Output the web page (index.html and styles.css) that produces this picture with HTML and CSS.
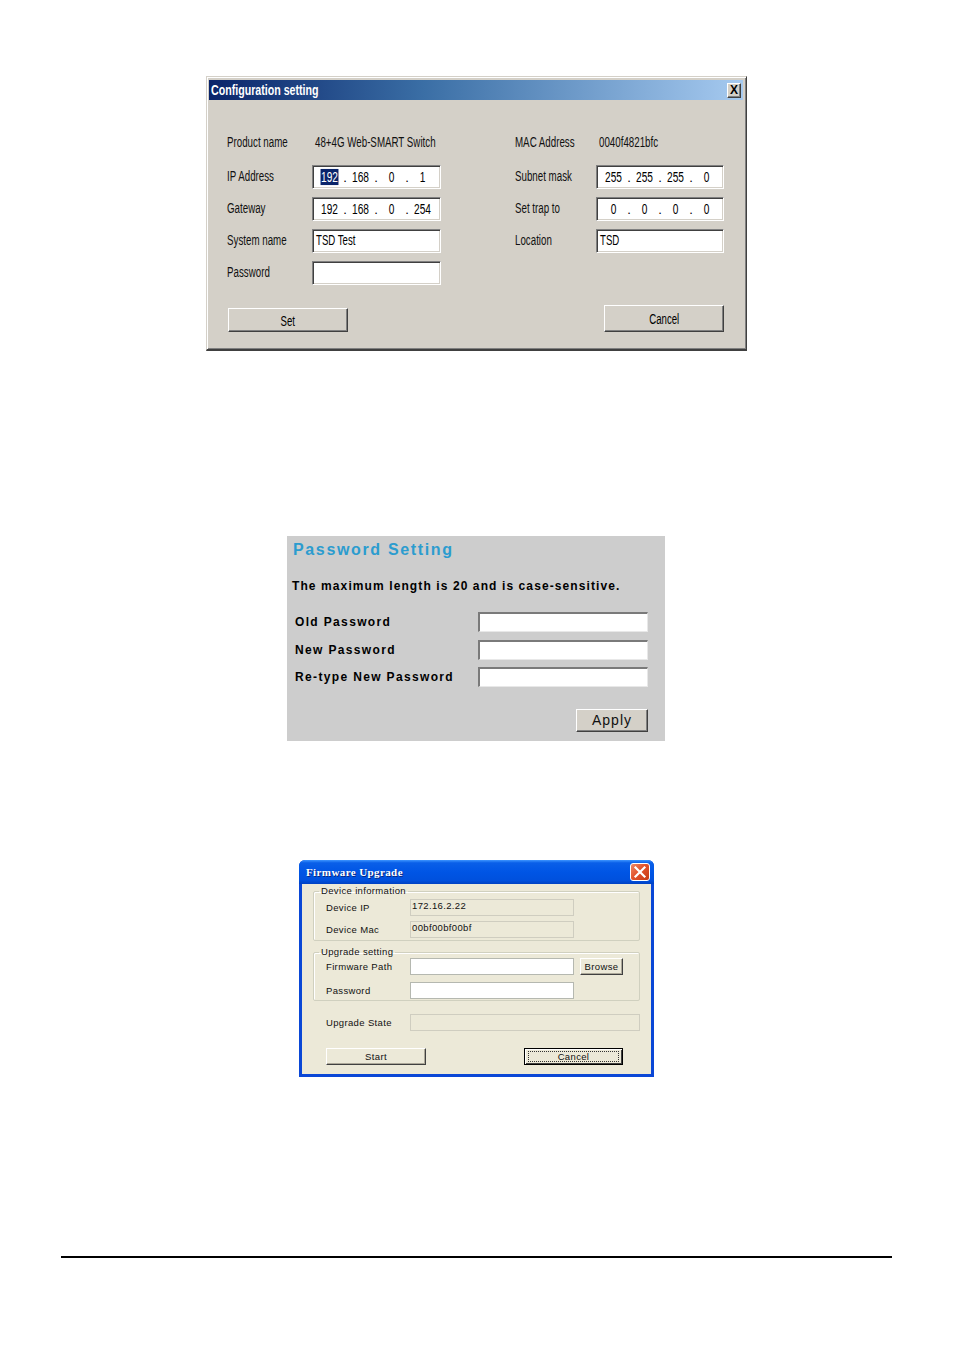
FILE: index.html
```html
<!DOCTYPE html>
<html>
<head>
<meta charset="utf-8">
<link rel="stylesheet" href="styles.css">
</head>
<body>
<div class="page">

  <section class="cfg">
    <div class="cfg-title">
      <span class="cfg-title-text">Configuration setting</span>
      <span class="cfg-close">X</span>
    </div>
    <div class="cfg-body">
      <div class="cfg-grid">
        <span class="cl">Product name</span>
        <span class="cl cv">48+4G Web-SMART Switch</span>
        <span class="cl cr">MAC Address</span>
        <span class="cl cv">0040f4821bfc</span>

        <span class="cl">IP Address</span>
        <div class="cin ip"><span class="seg sel">192</span><span class="dot">.</span><span class="seg">168</span><span class="dot">.</span><span class="seg">0</span><span class="dot">.</span><span class="seg">1</span></div>
        <span class="cl cr">Subnet mask</span>
        <div class="cin ip"><span class="seg">255</span><span class="dot">.</span><span class="seg">255</span><span class="dot">.</span><span class="seg">255</span><span class="dot">.</span><span class="seg">0</span></div>

        <span class="cl">Gateway</span>
        <div class="cin ip"><span class="seg">192</span><span class="dot">.</span><span class="seg">168</span><span class="dot">.</span><span class="seg">0</span><span class="dot">.</span><span class="seg">254</span></div>
        <span class="cl cr">Set trap to</span>
        <div class="cin ip"><span class="seg">0</span><span class="dot">.</span><span class="seg">0</span><span class="dot">.</span><span class="seg">0</span><span class="dot">.</span><span class="seg">0</span></div>

        <span class="cl">System name</span>
        <div class="cin txt"><span class="ct">TSD Test</span></div>
        <span class="cl cr">Location</span>
        <div class="cin txt"><span class="ct">TSD</span></div>

        <span class="cl">Password</span>
        <div class="cin txt"></div>
      </div>
      <div class="cfg-buttons">
        <div class="cbtn set"><span class="ct">Set</span></div>
        <div class="cbtn cancel"><span class="ct">Cancel</span></div>
      </div>
    </div>
  </section>

  <section class="pw">
    <h2 class="pw-title">Password Setting</h2>
    <p class="pw-note">The maximum length is 20 and is case-sensitive.</p>
    <div class="pw-grid">
      <span class="pw-label">Old Password</span><div class="pw-input"></div>
      <span class="pw-label">New Password</span><div class="pw-input"></div>
      <span class="pw-label">Re-type New Password</span><div class="pw-input"></div>
    </div>
    <div class="pw-actions"><div class="pw-apply">Apply</div></div>
  </section>

  <section class="fw">
    <div class="fw-title">
      <span class="fw-title-text">Firmware Upgrade</span>
      <span class="fw-close"><svg width="18" height="16" viewBox="0 0 18 16"><path d="M4.5 3.5 L13.5 12.5 M13.5 3.5 L4.5 12.5" stroke="#fff" stroke-width="2.2" stroke-linecap="square"/></svg></span>
    </div>
    <div class="fw-body">
      <fieldset class="grp grp1">
        <legend>Device information</legend>
        <div class="fw-row"><span class="fw-label">Device IP</span><div class="ro">172.16.2.22</div></div>
        <div class="fw-row"><span class="fw-label">Device Mac</span><div class="ro">00bf00bf00bf</div></div>
      </fieldset>
      <fieldset class="grp grp2">
        <legend>Upgrade setting</legend>
        <div class="fw-row"><span class="fw-label">Firmware Path</span><div class="wi"></div><div class="xbtn browse">Browse</div></div>
        <div class="fw-row"><span class="fw-label">Password</span><div class="wi"></div></div>
      </fieldset>
      <div class="fw-row state"><span class="fw-label">Upgrade State</span><div class="ro wide"></div></div>
      <div class="fw-buttons">
        <div class="xbtn start">Start</div>
        <div class="xbtn fcancel"><span class="focus">Cancel</span></div>
      </div>
    </div>
  </section>

  <hr class="rule">
</div>
</body>
</html>
```
FILE: styles.css
```css
html, body { margin: 0; padding: 0; background: #fff; }
.page { width: 954px; height: 1352px; overflow: hidden; }

/* ---------- Configuration setting ---------- */
.cfg {
  margin: 76px 0 0 206px;
  width: 541px; height: 275px;
  box-sizing: border-box;
  background: #d4d0c8;
  border-top: 1px solid #d4d0c8; border-left: 1px solid #d4d0c8;
  border-right: 1px solid #404040; border-bottom: 2px solid #404040;
  box-shadow: inset 1px 1px 0 #fff, inset -1px -1px 0 #808080;
  padding: 3px 3px 0 2px;
  font-family: "Liberation Sans", Arial, sans-serif;
  color: #000;
}
.cfg-title {
  height: 20px;
  background: linear-gradient(to right, #0a246a 0%, #3a6ea5 40%, #a6caf0 100%);
  display: flex; align-items: center; justify-content: space-between;
  padding: 0 2px 0 2px;
}
.cfg-title-text {
  color: #fff; font-weight: bold; font-size: 14px;
  display: inline-block; white-space: nowrap;
  transform: scale(0.76, 1.05); transform-origin: left center;
}
.cfg-close {
  width: 14px; height: 15px; box-sizing: border-box;
  background: #d4d0c8;
  border-top: 1px solid #fff; border-left: 1px solid #fff;
  border-right: 1px solid #404040; border-bottom: 1px solid #404040;
  box-shadow: inset -1px -1px 0 #808080;
  font-size: 12px; font-weight: bold; line-height: 13px; text-align: center;
}
.cfg-body { padding: 30px 19px 0 18px; }
.cfg-grid {
  display: grid;
  grid-template-columns: 85px 129px 155px 128px;
  grid-template-rows: 27px 24px 24px 24px 24px;
  row-gap: 8px;
  align-items: center;
}
.cl {
  font-size: 13px; display: block; white-space: nowrap; color: #111;
  transform: translateY(-1.5px) scale(0.75, 1.15); transform-origin: left center;
}
.cr { margin-left: 74px; }
.cv { margin-left: 3px; }
.cin {
  height: 24px; box-sizing: border-box;
  background: #fff;
  border-top: 1px solid #808080; border-left: 1px solid #808080;
  border-right: 1px solid #fff; border-bottom: 1px solid #fff;
  box-shadow: inset 1px 1px 0 #404040, inset -1px -1px 0 #d4d0c8;
  font-size: 13px;
  display: flex; align-items: center;
}
.cin.txt { padding-left: 3px; }
.ct {
  display: inline-block; white-space: nowrap; font-size: 13px;
  transform: translateY(-1.5px) scale(0.74, 1.15); transform-origin: left center;
}
.cin.ip { padding-left: 5px; }
.seg {
  width: 23px; text-align: center; display: inline-block; line-height: 14px;
  transform: scale(0.78, 1.15);
}
.dot { width: 8px; text-align: center; display: inline-block; }
.seg.sel { background: #0a246a; color: #fff; }
.cfg-buttons {
  display: flex; justify-content: space-between; align-items: flex-end;
  margin-top: 20px; padding-left: 1px;
}
.cbtn {
  width: 120px; box-sizing: border-box;
  background: #d4d0c8;
  border-top: 1px solid #fff; border-left: 1px solid #fff;
  border-right: 1px solid #404040; border-bottom: 1px solid #404040;
  box-shadow: inset -1px -1px 0 #808080;
  display: flex; align-items: center; justify-content: center;
}
.cbtn .ct { transform: scale(0.74, 1.15); transform-origin: center center; }
.cbtn.set { height: 24px; }
.cbtn.cancel { height: 27px; }

/* ---------- Password Setting ---------- */
.pw {
  margin: 185px 0 0 287px;
  width: 378px; height: 205px; box-sizing: border-box;
  background: #cdcdcd;
  padding: 4px 0 0 5px;
  font-family: "Liberation Sans", Arial, sans-serif;
}
.pw-title {
  margin: 0; font-size: 16px; font-weight: bold; letter-spacing: 1.65px;
  color: #2b9ccf; line-height: 20px; padding-left: 1px;
}
.pw-note {
  margin: 18px 0 0 0; font-size: 12px; font-weight: bold; letter-spacing: 1.1px;
  line-height: 16px; white-space: nowrap;
}
.pw-grid {
  margin-top: 18px; padding-left: 3px;
  display: grid; grid-template-columns: 183px 170px;
  grid-auto-rows: 20px; row-gap: 7.5px; align-items: center;
}
.pw-label { font-size: 12px; font-weight: bold; letter-spacing: 1.35px; white-space: nowrap; }
.pw-input {
  height: 20px; box-sizing: border-box; background: #fff;
  border-top: 2px solid #7a7a7a; border-left: 2px solid #7a7a7a;
  border-right: 1px solid #e8e8e8; border-bottom: 1px solid #e8e8e8;
}
.pw-actions { display: flex; justify-content: flex-end; margin-top: 22px; padding-right: 17px; }
.pw-apply {
  width: 72px; height: 23px; box-sizing: border-box;
  background: #d4d0c8;
  border-top: 1px solid #fff; border-left: 1px solid #fff;
  border-right: 1px solid #404040; border-bottom: 1px solid #404040;
  box-shadow: inset -1px -1px 0 #808080;
  font-size: 14px; letter-spacing: 1px; text-align: center; line-height: 21px; color: #111;
}

/* ---------- Firmware Upgrade ---------- */
.fw {
  margin: 119px 0 0 299px;
  width: 355px; height: 217px; box-sizing: border-box;
  background: #0a47d6;
  border-radius: 6px 6px 0 0;
  padding: 0 3px 3px 3px;
  font-family: "Liberation Sans", Arial, sans-serif;
  display: flex; flex-direction: column;
}
.fw-title {
  height: 24px; flex: none; margin: 0 -3px; padding: 0 4px 0 7px;
  border-radius: 6px 6px 0 0;
  background: linear-gradient(to bottom, #3d95ff 0%, #0a5fe8 12%, #0055e5 50%, #0050dd 85%, #0041c2 100%);
  display: flex; align-items: center; justify-content: space-between;
}
.fw-title-text {
  color: #fff; font-family: "Liberation Serif", "Times New Roman", serif;
  font-weight: bold; font-size: 11px; letter-spacing: 0.4px;
  text-shadow: 1px 1px 0 #0a2a80;
}
.fw-close {
  width: 20px; height: 18px; box-sizing: border-box; border-radius: 3px;
  background: linear-gradient(135deg, #f08a68 0%, #e2532c 45%, #c63a13 100%);
  border: 1px solid #fff;
  display: flex; align-items: center; justify-content: center;
}
.fw-close svg { display: block; }
.fw-body {
  flex: 1; background: #ece9d8;
  padding: 2px 11px 0 11px;
  font-size: 9.5px; letter-spacing: 0.35px; color: #111;
}
.grp {
  margin: 0; padding: 0 0 0 12px;
  border: 1px solid #d0d0bf; border-radius: 2px;
  box-shadow: 1px 1px 0 #fff inset;
}
.grp legend { padding: 0 2px; margin-left: -7px; font-size: 9.5px; line-height: 10px; }
.grp1 { height: 55px; box-sizing: border-box; padding-top: 3px; }
.grp2 { height: 54px; box-sizing: border-box; margin-top: 6px; padding-top: 1px; }
.fw-row { display: flex; align-items: center; height: 17px; }
.grp1 .fw-row + .fw-row { margin-top: 5px; }
.grp2 .fw-row + .fw-row { margin-top: 7px; }
.fw-label { width: 84px; flex: none; }
.ro {
  width: 164px; height: 17px; box-sizing: border-box;
  border: 1px solid #cfcdc0; background: #ece9d8;
  padding-left: 1px; line-height: 12px; font-size: 9.5px;
}
.ro.wide { width: 230px; }
.wi {
  width: 164px; height: 17px; box-sizing: border-box;
  border: 1px solid #b5b8b0; background: #fff;
}
.xbtn {
  box-sizing: border-box; background: #ece9d8;
  border-top: 1px solid #fff; border-left: 1px solid #fff;
  border-right: 1px solid #404040; border-bottom: 1px solid #404040;
  box-shadow: inset -1px -1px 0 #aca899;
  text-align: center; height: 17px; line-height: 15px;
}
.browse { width: 43px; margin-left: 6px; }
.state { margin-top: 13px; padding-left: 13px; }
.fw-buttons { display: flex; justify-content: space-between; padding: 0 17px 0 13px; margin-top: 17px; }
.start { width: 100px; }
.fcancel {
  width: 99px; border: 1px solid #000;
  box-shadow: inset 1px 1px 0 #fff, inset -1px -1px 0 #404040;
  padding: 2px 3px; line-height: 9px;
}
.focus { display: block; border: 1px dotted #333; height: 9px; line-height: 10px; }

/* ---------- rule ---------- */
.rule {
  margin: 179px 0 0 61px; width: 831px; height: 0;
  border: 0; border-top: 2px solid #000;
}
```
